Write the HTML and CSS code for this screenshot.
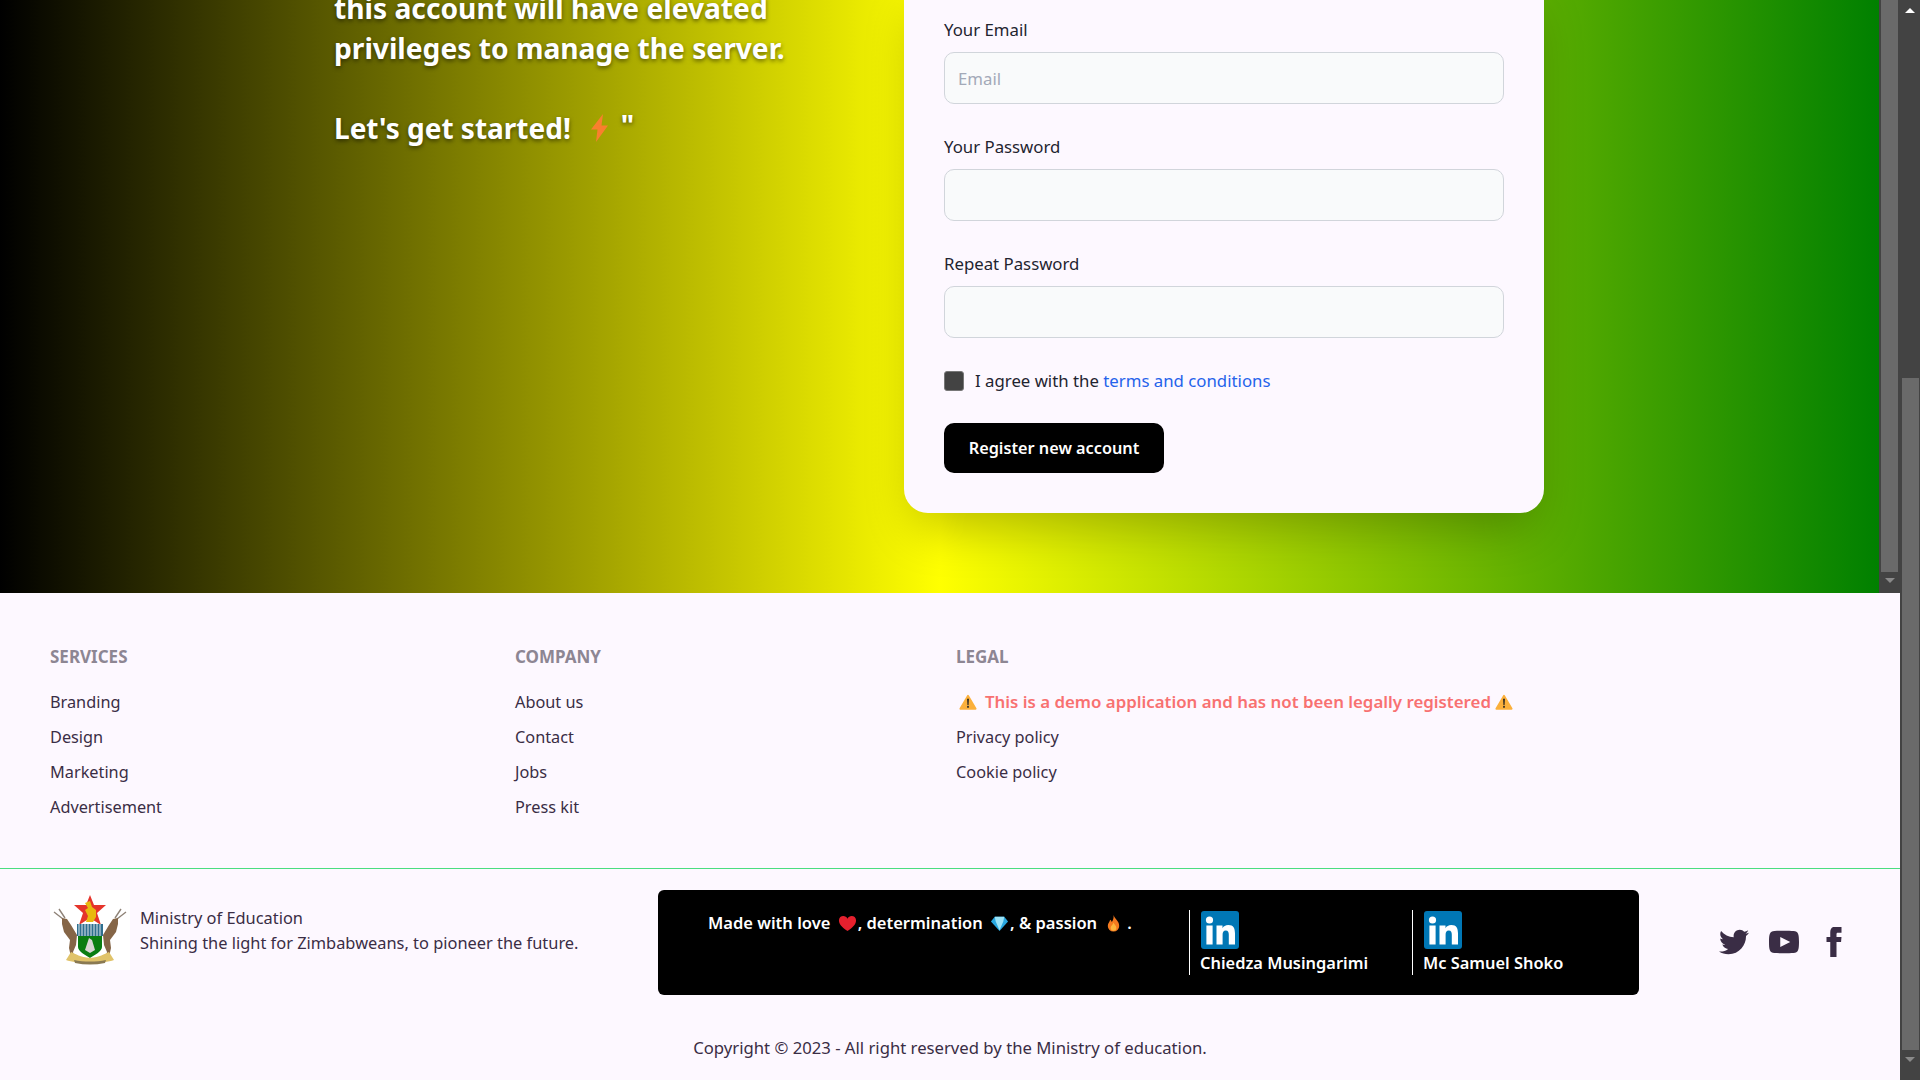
FILE: index.html
```html
<!DOCTYPE html>
<html lang="en">
<head>
    <meta charset="UTF-8">
    <meta name="viewport" content="width=device-width, initial-scale=1.0">
    <title>Register</title>
    <link rel="stylesheet" href="styles.css">
</head>
<body>
    <svg class="sprites" width="0" height="0">
        <symbol id="warn" viewBox="0 0 20 20">
            <path d="M10 3 18.500 17.500H1.500Z" fill="#fbb03b" stroke="#fbb03b" stroke-width="2" stroke-linejoin="round"/>
            <path d="M9 6.500h2l-.4 7h-1.200ZM9.100 14.500h1.800v2H9.100Z" fill="#222"/>
        </symbol>
        <symbol id="linkedin" viewBox="0 0 38 38">
            <rect width="38" height="38" rx="3" fill="#0077b5"/>
            <circle cx="8.500" cy="9" r="3.600" fill="#fff"/>
            <rect x="5.400" y="14.500" width="6.200" height="19" fill="#fff"/>
            <path d="M15.500 14.500h6v2.700c1-1.800 3-3.100 5.800-3.100 5.300 0 6.700 3.500 6.700 8.400v11h-6.200v-9.800c0-2.400-.6-4.300-3-4.300s-3.200 1.900-3.200 4.300v9.800h-6.100Z" fill="#fff"/>
        </symbol>
        <symbol id="kudu" viewBox="0 0 80 80">
            <path d="M4 22l9 7M9 19l6 9" stroke="#8f8378" stroke-width="1.400" fill="none"/>
            <path d="M12 28l5 1 4 6 6 10-1 10-3 7 1 5-3 0-2-9 1-8-6-8-2-8Z" fill="#856547"/>
        </symbol>
    </svg>

    <div class="window">
        <div class="page">
            <div class="hero-wrap">
                <section class="hero">
                    <div class="hero-text">
                        <p>this account will have elevated<br>privileges to manage the server.</p>
                        <p class="hero-start">Let's get started!
                            <svg class="bolt" viewBox="0 0 17 28"><path d="M12 0 0 15.500h6.500L5 28l12-16.500h-6.500Z" fill="#f97f2e"/></svg>
                            <span class="quote">"</span>
                        </p>
                    </div>
                    <form class="card">
                        <label class="field">
                            <span class="field-label">Your Email</span>
                            <input class="input" type="email" placeholder="Email">
                        </label>
                        <label class="field">
                            <span class="field-label">Your Password</span>
                            <input class="input" type="password">
                        </label>
                        <label class="field">
                            <span class="field-label">Repeat Password</span>
                            <input class="input" type="password">
                        </label>
                        <div class="agree">
                            <span class="check"></span>
                            <span>I agree with the <a href="#" class="link">terms and conditions</a></span>
                        </div>
                        <button class="btn" type="button">Register new account</button>
                    </form>
                </section>
                <div class="scrollbar inner-bar">
                    <div class="thumb inner-thumb"></div>
                    <div class="arrow-down dim"></div>
                </div>
            </div>

            <footer class="footer">
                <div class="footer-cols">
                    <div class="col col-services">
                        <h6 class="col-title">SERVICES</h6>
                        <a href="#">Branding</a>
                        <a href="#">Design</a>
                        <a href="#">Marketing</a>
                        <a href="#">Advertisement</a>
                    </div>
                    <div class="col col-company">
                        <h6 class="col-title">COMPANY</h6>
                        <a href="#">About us</a>
                        <a href="#">Contact</a>
                        <a href="#">Jobs</a>
                        <a href="#">Press kit</a>
                    </div>
                    <div class="col">
                        <h6 class="col-title">LEGAL</h6>
                        <a href="#" class="demo-note">
                            <svg class="warn warn-first"><use href="#warn"/></svg>
                            <span>This is a demo application and has not been legally registered</span>
                            <svg class="warn"><use href="#warn"/></svg>
                        </a>
                        <a href="#">Privacy policy</a>
                        <a href="#">Cookie policy</a>
                    </div>
                </div>

                <div class="footer-bottom">
                    <div class="brand">
                        <svg class="crest" viewBox="0 0 80 80">
                            <rect width="80" height="80" fill="#fff"/>
                            <path d="M40 5l4 10 12 0-9 8 4 12-11-7-11 7 4-12-9-8 12 0Z" fill="#e5342b"/>
                            <path d="M35 13l5-2 2 6 4 3v7l-3 5h-7l2-6-3-6 3-2Z" fill="#e8b90f"/>
                            <use href="#kudu"/>
                            <use href="#kudu" transform="matrix(-1 0 0 1 80 0)"/>
                            <path d="M27 34h26v12H27Z" fill="#2f6f8f"/>
                            <path d="M29 34v12M32 34v12M35 34v12M38 34v12M41 34v12M44 34v12M47 34v12M50 34v12" stroke="#dfe8ec" stroke-width="1"/>
                            <path d="M28 46h24v11c0 4-7 8-12 11-5-3-12-7-12-11Z" fill="#0a7d12"/>
                            <path d="M35 60l4-12 3 2 3 10-5 3Z" fill="#d9d6d6"/>
                            <path d="M21 62c5 2 9 5 19 6 10-1 14-4 19-6l5 8c-10 4-38 4-48 0Z" fill="#e0c36a"/>
                            <path d="M24 70c10 2 22 2 32 0l-1 3c-10 2-20 2-30 0Z" fill="#8a7a52"/>
                        </svg>
                        <p>Ministry of Education<br>Shining the light for Zimbabweans, to pioneer the future.</p>
                    </div>

                    <div class="credits">
                        <p class="made">Made with love <svg class="emoji" viewBox="0 0 20 20"><path d="M10 18C3 13 1 10 1 6.500 1 3.500 3.300 2 5.500 2 7.500 2 9.200 3 10 5c.8-2 2.500-3 4.500-3C16.700 2 19 3.500 19 6.500 19 10 17 13 10 18Z" fill="#e5202e"/></svg>, determination <svg class="emoji" viewBox="0 0 20 20"><path d="M5 3h10l4 5-9 10L1 8Z" fill="#29a8e0"/><path d="M6 8h8l-4 9ZM5 3h10l-1 5H6Z" fill="#9be3f7"/></svg>, &amp; passion <svg class="emoji" viewBox="0 0 20 20"><path d="M10 1c1 4 6 6 6 11.500A6 6 0 0 1 4 12.500C4 9.500 6 8.500 6.500 6c1 .5 1.500 1.500 1.700 2.500C9.500 7 10.500 4 10 1Z" fill="#f47a1f"/><path d="M10 9c.5 2 3 3 3 5.500a3 3 0 0 1-6 0C7 12.500 9.500 11.500 10 9Z" fill="#fdb53c"/></svg>&thinsp;.</p>
                        <div class="person person-first">
                            <svg class="linkedin"><use href="#linkedin"/></svg>
                            <span>Chiedza Musingarimi</span>
                        </div>
                        <div class="person">
                            <svg class="linkedin"><use href="#linkedin"/></svg>
                            <span>Mc Samuel Shoko</span>
                        </div>
                    </div>

                    <div class="social">
                        <svg viewBox="0 0 24 24"><path d="M24 4.557c-.883.392-1.832.656-2.828.775 1.017-.609 1.798-1.574 2.165-2.724-.951.564-2.005.974-3.127 1.195-.897-.957-2.178-1.555-3.594-1.555-3.179 0-5.515 2.966-4.797 6.045-4.091-.205-7.719-2.165-10.148-5.144-1.29 2.213-.669 5.108 1.523 6.574-.806-.026-1.566-.247-2.229-.616-.054 2.281 1.581 4.415 3.949 4.89-.693.188-1.452.232-2.224.084.626 1.956 2.444 3.379 4.6 3.419-2.07 1.623-4.678 2.348-7.29 2.04 2.179 1.397 4.768 2.212 7.548 2.212 9.142 0 14.307-7.721 14.055-14.646.962-.695 1.797-1.562 2.457-2.549z"/></svg>
                        <svg viewBox="0 0 24 24"><path d="M19.615 3.184c-3.604-.246-11.631-.245-15.23 0-3.897.266-4.356 2.62-4.385 8.816.029 6.185.484 8.549 4.385 8.816 3.6.245 11.626.246 15.23 0 3.897-.266 4.356-2.62 4.385-8.816-.029-6.185-.484-8.549-4.385-8.816zm-10.615 12.816v-8l8 3.993-8 4.007z"/></svg>
                        <svg viewBox="0 0 24 24"><path d="M9 8h-3v4h3v12h5v-12h3.642l.358-4h-4v-2.173c0-.955.192-1.327 1.115-1.327h2.885v-5h-3.808c-3.596 0-5.192 1.583-5.192 4.615v3.385z"/></svg>
                    </div>
                </div>

                <p class="copyright">Copyright © 2023 - All right reserved by the Ministry of education.</p>
            </footer>
        </div>

        <div class="scrollbar outer-bar">
            <div class="arrow-up"></div>
            <div class="thumb outer-thumb"></div>
            <div class="arrow-down dim"></div>
        </div>
    </div>
</body>
</html>
```

FILE: styles.css
```css
* {
    box-sizing: border-box;
}

html,
body {
    margin: 0;
    height: 100%;
    overflow: hidden;
}

body {
    font-family: "Noto Sans", sans-serif;
    font-size: 16px;
    color: #3a2d45;
    background-color: #fdf8ff;
}

p {
    margin: 0;
}

a {
    color: inherit;
    text-decoration: none;
}

.sprites {
    display: block;
    height: 0;
}

.window {
    display: flex;
    height: 1080px;
}

.page {
    flex: 1;
    min-width: 0;
    display: flex;
    flex-direction: column;
}

/* scrollbars are part of the picture */
.scrollbar {
    background: #434343;
    display: flex;
    flex-direction: column;
    align-items: center;
}

.thumb {
    width: 17px;
    background: #6a6a6a;
}

.outer-bar {
    width: 20px;
    flex: none;
    padding-top: 8px;
}

.outer-thumb {
    margin-top: 365px;
    height: 672px;
}

.inner-bar {
    width: 21px;
    flex: none;
}

.inner-thumb {
    height: 572px;
}

.arrow-up {
    border: 5px solid transparent;
    border-top: 0;
    border-bottom: 5px solid #fff;
}

.arrow-down {
    border: 5px solid transparent;
    border-bottom: 0;
    border-top: 5px solid #fff;
    margin-top: 6px;
}

.arrow-down.dim {
    border-top-color: #8a8a8a;
}

.outer-bar .arrow-down {
    margin-top: 7px;
}

/* hero */
.hero-wrap {
    display: flex;
    height: 593px;
    flex: none;
}

.hero {
    flex: 1;
    min-width: 0;
    display: flex;
    align-items: flex-end;
    justify-content: flex-start;
    padding: 0 0 80px 334px;
    overflow: hidden;
    background: linear-gradient(to right, #000, #ff0 50%, #008000);
}

.hero-text {
    width: 570px;
    align-self: flex-start;
    margin-top: -12px;
    font-size: 28.2px;
    line-height: 40px;
    font-weight: 700;
    color: #fff;
    text-shadow: 0 2px 4px rgba(0, 0, 0, .5);
}

.hero-start {
    margin-top: 40px;
    display: flex;
    align-items: center;
    font-size: 28px;
}

.bolt {
    width: 17px;
    height: 28px;
    margin: 0 13px 0 20px;
}

.quote {
    position: relative;
    top: -3px;
}

.card {
    width: 640px;
    flex: none;
    padding: 40px 40px 40px;
    border-radius: 24px;
    background: #fdf8ff;
    color: #1f2430;
    font-size: 16.8px;
    box-shadow: 0 25px 50px -12px rgba(0, 0, 0, .25);
}

.field {
    display: block;
    margin-bottom: 29px;
}

.field-label {
    display: block;
    height: 28px;
    line-height: 28px;
    margin-bottom: 8px;
}

.input {
    display: block;
    width: 100%;
    height: 52px;
    padding: 0 13px;
    font: inherit;
    background: #f9fafb;
    border: 1px solid #d1d5db;
    border-radius: 10px;
}

.input::placeholder {
    color: #a3a9b8;
}

.agree {
    display: flex;
    align-items: center;
    gap: 11px;
    margin-top: 31px;
}

.check {
    width: 20px;
    height: 20px;
    background: #434343;
    border: 1px solid #777;
    border-radius: 3px;
}

.link {
    color: #2563eb;
}

.btn {
    display: block;
    width: 220px;
    height: 50px;
    margin-top: 31px;
    border: 0;
    border-radius: 10px;
    background: #000;
    color: #fff;
    font: 600 16.25px "Noto Sans", sans-serif;
}

/* footer */
.footer {
    flex: 1;
}

.footer-cols {
    display: flex;
    height: 276px;
    padding: 51px 50px 0;
    border-bottom: 1px solid #4ade80;
}

.col {
    display: flex;
    flex-direction: column;
    gap: 9px;
    align-items: flex-start;
}

.col a {
    font-size: 16.3px;
    line-height: 26px;
}

.col-services {
    width: 465px;
}

.col-company {
    width: 441px;
}

.col-title {
    margin: 0 0 9.500px;
    font-size: 17px;
    line-height: 26px;
    font-weight: 700;
    color: #8d8693;
}

.col a.demo-note {
    display: flex;
    align-items: center;
    gap: 4px;
    font-size: 16.85px;
    font-weight: 600;
    color: #f87171;
}

.warn {
    width: 18px;
    height: 18px;
}

.warn-first {
    margin: 0 4px 0 3px;
}

.footer-bottom {
    display: flex;
    align-items: flex-start;
    padding: 21px 50px 0;
}

.brand {
    width: 608px;
    display: flex;
    align-items: center;
    gap: 10px;
    font-size: 16.4px;
    line-height: 25px;
}

.crest {
    width: 80px;
    height: 80px;
    flex: none;
}

.credits {
    width: 981px;
    height: 105px;
    flex: none;
    display: flex;
    align-items: flex-start;
    padding: 20px 0 0 50px;
    border-radius: 6px;
    background: #000;
    color: #fff;
    font-size: 16.4px;
    font-weight: 600;
}

.made {
    width: 481px;
    flex: none;
    font-size: 16.5px;
    line-height: 26px;
    white-space: nowrap;
}

.emoji {
    width: 19px;
    height: 19px;
    margin: 0 1px 0 3px;
    vertical-align: -4px;
}

.person {
    width: 223px;
    height: 65px;
    flex: none;
    display: flex;
    flex-direction: column;
    align-items: flex-start;
    gap: 2px;
    padding-left: 10px;
    border-left: 1px solid #fff;
    line-height: 24px;
}

.linkedin {
    width: 38px;
    height: 38px;
    margin: 1px 0 0 1px;
}

.social {
    display: flex;
    gap: 20px;
    margin: 37px 0 0 80px;
}

.social svg {
    width: 30px;
    height: 30px;
    fill: currentColor;
}

.copyright {
    margin-top: 41px;
    text-align: center;
    font-size: 16.7px;
    line-height: 24px;
}
```
